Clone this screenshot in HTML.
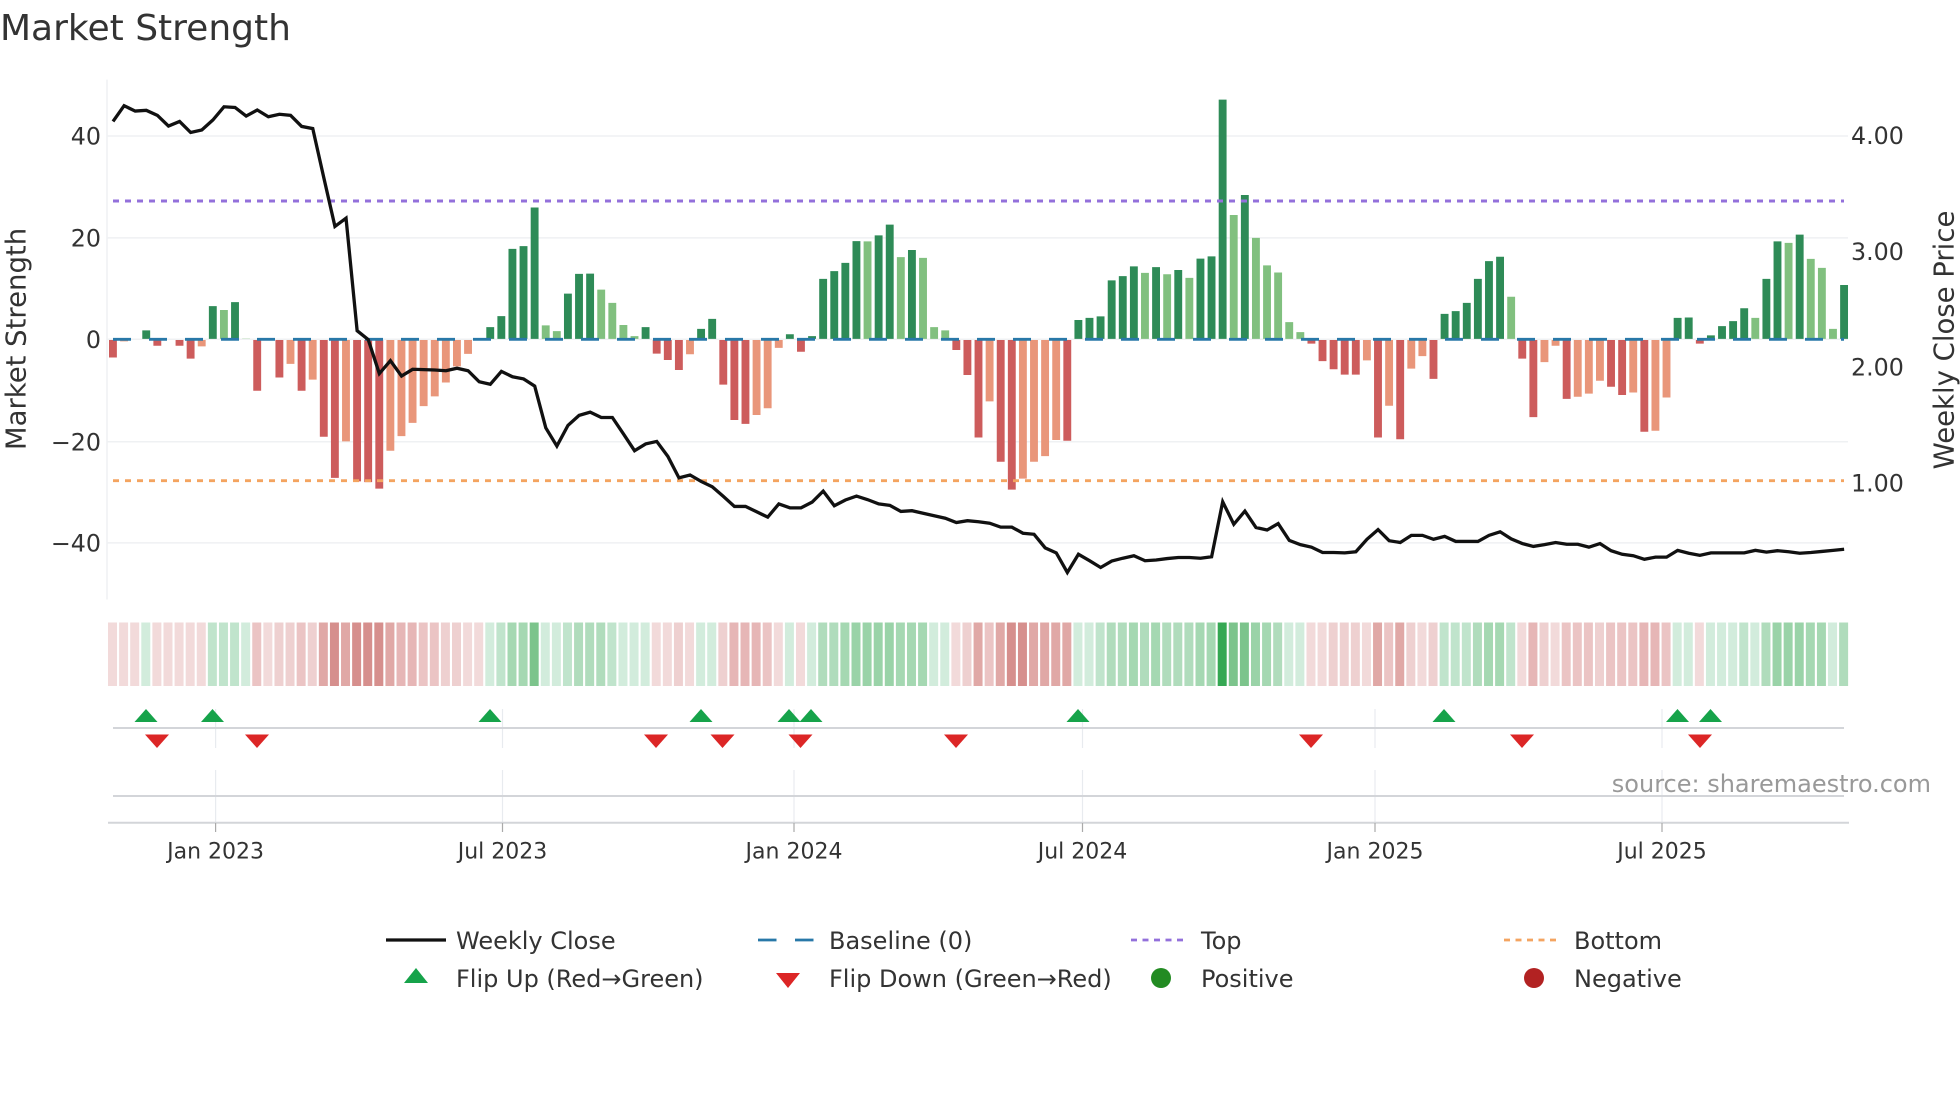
<!DOCTYPE html>
<html><head><meta charset="utf-8"><title>Market Strength</title>
<style>
html,body{margin:0;padding:0;background:#fff}
svg{display:block}
text{font-family:"DejaVu Sans","Liberation Sans",sans-serif}
.t{font-size:23.75px;fill:#333}
.d{font-size:22px;fill:#333;text-anchor:middle}
.l{font-size:24px;fill:#333}
</style></head><body>
<svg width="1960" height="1102" viewBox="0 0 1960 1102" xmlns="http://www.w3.org/2000/svg">
<rect width="1960" height="1102" fill="#fff"/>
<text x="0" y="40" font-size="36" fill="#333">Market Strength</text>

<!-- grid -->
<g stroke="#eff1f3" stroke-width="1.5" fill="none">
<path d="M107 136H1848M107 237.900H1848M107 339.300H1848M107 441.800H1848M107 542.900H1848"/>
<path d="M107 79.600V599.500"/>
</g>

<!-- bars -->
<g transform="translate(109,60) scale(11.097,.35714)">
<path fill="#2e8b57" d="M3 757h.71V781h-.71zM9 689h.71V781h-.71zM11 678h.71V781h-.71zM34 748h.71V781h-.71zM35 717h.71V781h-.71zM36 529h.71V781h-.71zM37 521h.71V781h-.71zM38 413h.71V781h-.71zM41 654h.71V781h-.71zM42 599h.71V781h-.71zM43 598h.71V781h-.71zM48 748h.71V781h-.71zM53 753h.71V781h-.71zM54 725h.71V781h-.71zM61 768h.71V781h-.71zM63 773h.71V781h-.71zM64 613h.71V781h-.71zM65 591h.71V781h-.71zM66 568h.71V781h-.71zM67 507h.71V781h-.71zM69 491h.71V781h-.71zM70 461h.71V781h-.71zM72 532h.71V781h-.71zM87 728h.71V781h-.71zM88 722h.71V781h-.71zM89 718h.71V781h-.71zM90 617h.71V781h-.71zM91 605h.71V781h-.71zM92 578h.71V781h-.71zM94 580h.71V781h-.71zM96 588h.71V781h-.71zM98 556h.71V781h-.71zM99 550h.71V781h-.71zM100 111h.71V781h-.71zM102 378h.71V781h-.71zM120 711h.71V781h-.71zM121 703h.71V781h-.71zM122 680h.71V781h-.71zM123 613h.71V781h-.71zM124 563h.71V781h-.71zM125 551h.71V781h-.71zM141 722h.71V781h-.71zM142 721h.71V781h-.71zM144 771h.71V781h-.71zM145 745h.71V781h-.71zM146 731h.71V781h-.71zM147 695h.71V781h-.71zM149 613h.71V781h-.71zM150 508h.71V781h-.71zM152 489h.71V781h-.71zM156 630h.71V781h-.71z"/>
<path fill="#81c07f" d="M10 700h.71V781h-.71zM12 780h.71V781h-.71zM39 743h.71V781h-.71zM40 759h.71V781h-.71zM44 643h.71V781h-.71zM45 680h.71V781h-.71zM46 742h.71V781h-.71zM47 773h.71V781h-.71zM68 508h.71V781h-.71zM71 552h.71V781h-.71zM73 554h.71V781h-.71zM74 748h.71V781h-.71zM75 757h.71V781h-.71zM93 596h.71V781h-.71zM95 600h.71V781h-.71zM97 610h.71V781h-.71zM101 434h.71V781h-.71zM103 498h.71V781h-.71zM104 575h.71V781h-.71zM105 595h.71V781h-.71zM106 734h.71V781h-.71zM107 762h.71V781h-.71zM126 663h.71V781h-.71zM148 722h.71V781h-.71zM151 512h.71V781h-.71zM153 557h.71V781h-.71zM154 582h.71V781h-.71zM155 753h.71V781h-.71z"/>
<path fill="#cd5c5c" d="M0 784h.71V833h-.71zM4 784h.71V800h-.71zM6 784h.71V800h-.71zM7 784h.71V836h-.71zM13 784h.71V926h-.71zM15 784h.71V889h-.71zM17 784h.71V926h-.71zM19 784h.71V1055h-.71zM20 784h.71V1170h-.71zM22 784h.71V1180h-.71zM23 784h.71V1182h-.71zM24 784h.71V1200h-.71zM49 784h.71V822h-.71zM50 784h.71V840h-.71zM51 784h.71V868h-.71zM55 784h.71V909h-.71zM56 784h.71V1008h-.71zM57 784h.71V1019h-.71zM62 784h.71V817h-.71zM76 784h.71V812h-.71zM77 784h.71V882h-.71zM78 784h.71V1057h-.71zM80 784h.71V1125h-.71zM81 784h.71V1203h-.71zM86 784h.71V1066h-.71zM108 784h.71V794h-.71zM109 784h.71V843h-.71zM110 784h.71V866h-.71zM111 784h.71V881h-.71zM112 784h.71V881h-.71zM114 784h.71V1057h-.71zM116 784h.71V1062h-.71zM119 784h.71V893h-.71zM127 784h.71V836h-.71zM128 784h.71V1000h-.71zM131 784h.71V949h-.71zM135 784h.71V915h-.71zM136 784h.71V938h-.71zM138 784h.71V1041h-.71zM143 784h.71V794h-.71z"/>
<path fill="#e9967a" d="M1 784h.71V788h-.71zM8 784h.71V802h-.71zM16 784h.71V851h-.71zM18 784h.71V895h-.71zM21 784h.71V1068h-.71zM25 784h.71V1094h-.71zM26 784h.71V1053h-.71zM27 784h.71V1016h-.71zM28 784h.71V969h-.71zM29 784h.71V942h-.71zM30 784h.71V903h-.71zM31 784h.71V858h-.71zM32 784h.71V823h-.71zM52 784h.71V824h-.71zM58 784h.71V994h-.71zM59 784h.71V975h-.71zM60 784h.71V806h-.71zM79 784h.71V956h-.71zM82 784h.71V1172h-.71zM83 784h.71V1125h-.71zM84 784h.71V1109h-.71zM85 784h.71V1064h-.71zM113 784h.71V841h-.71zM115 784h.71V968h-.71zM117 784h.71V864h-.71zM118 784h.71V829h-.71zM129 784h.71V846h-.71zM130 784h.71V800h-.71zM132 784h.71V943h-.71zM133 784h.71V934h-.71zM134 784h.71V898h-.71zM137 784h.71V931h-.71zM139 784h.71V1038h-.71zM140 784h.71V945h-.71z"/>
</g>

<!-- reference lines -->
<line x1="113" x2="1844" y1="339.300" y2="339.300" stroke="#2878a8" stroke-width="2.900" stroke-dasharray="18 18"/>
<line x1="113" x2="1844" y1="201" y2="201" stroke="#9370db" stroke-width="2.900" stroke-dasharray="6 6"/>
<line x1="113" x2="1844" y1="480.700" y2="480.700" stroke="#f4a460" stroke-width="2.900" stroke-dasharray="6 6"/>

<!-- price line -->
<g transform="translate(113,60) scale(11.097,.35714)">
<path fill="none" stroke="#111" stroke-width="3.300" stroke-linejoin="miter" vector-effect="non-scaling-stroke" d="M0 172L1 128L2 143L3 141L4 155L5 185L6 172L7 203L8 196L9 168L10 131L11 133L12 157L13 140L14 159L15 152L16 155L17 186L18 192L19 330L20 466L21 443L22 758L23 783L24 878L25 842L26 885L27 866L28 867L29 868L30 870L31 863L32 870L33 901L34 908L35 872L36 887L37 893L38 913L39 1030L40 1081L41 1023L42 995L43 986L44 1001L45 1001L46 1047L47 1094L48 1075L49 1068L50 1110L51 1170L52 1162L53 1180L54 1195L55 1222L56 1250L57 1250L58 1265L59 1280L60 1243L61 1254L62 1254L63 1238L64 1207L65 1248L66 1232L67 1221L68 1231L69 1243L70 1247L71 1264L72 1262L73 1269L74 1276L75 1283L76 1295L77 1290L78 1293L79 1297L80 1308L81 1308L82 1325L83 1328L84 1366L85 1380L86 1435L87 1384L88 1402L89 1421L90 1403L91 1395L92 1388L93 1402L94 1400L95 1396L96 1393L97 1393L98 1395L99 1391L100 1237L101 1300L102 1263L103 1309L104 1316L105 1298L106 1345L107 1357L108 1364L109 1379L110 1379L111 1380L112 1377L113 1342L114 1315L115 1346L116 1351L117 1331L118 1331L119 1342L120 1334L121 1348L122 1348L123 1348L124 1331L125 1321L126 1341L127 1354L128 1362L129 1357L130 1351L131 1356L132 1356L133 1364L134 1354L135 1374L136 1384L137 1388L138 1398L139 1392L140 1392L141 1373L142 1381L143 1387L144 1380L145 1380L146 1380L147 1380L148 1373L149 1378L150 1374L151 1377L152 1381L153 1379L154 1376L155 1373L156 1370"/>
</g>

<!-- axis labels -->
<g text-anchor="end">
<text class="t" x="101" y="144.500">40</text>
<text class="t" x="101" y="246.500">20</text>
<text class="t" x="101" y="347.800">0</text>
<text class="t" x="101" y="450.500">−20</text>
<text class="t" x="101" y="551.500">−40</text>
</g>
<text class="t" x="1851" y="144.200">4.00</text>
<text class="t" x="1851" y="260.200">3.00</text>
<text class="t" x="1851" y="375.500">2.00</text>
<text class="t" x="1851" y="491.600">1.00</text>
<text font-size="27.500" fill="#333" text-anchor="middle" transform="translate(25.500,339) rotate(-90)">Market Strength</text>
<text font-size="27.500" fill="#333" text-anchor="middle" transform="translate(1953.500,340) rotate(-90)">Weekly Close Price</text>

<!-- heat strip -->
<g transform="translate(108,622.5) scale(11.097,63.5)">
<path fill="#f2dada" d="M0 0h.81v1h-.81zM1 0h.81v1h-.81zM2 0h.81v1h-.81zM4 0h.81v1h-.81zM5 0h.81v1h-.81zM6 0h.81v1h-.81zM7 0h.81v1h-.81zM8 0h.81v1h-.81zM14 0h.81v1h-.81zM32 0h.81v1h-.81zM33 0h.81v1h-.81zM49 0h.81v1h-.81zM50 0h.81v1h-.81zM52 0h.81v1h-.81zM60 0h.81v1h-.81zM62 0h.81v1h-.81zM76 0h.81v1h-.81zM108 0h.81v1h-.81zM109 0h.81v1h-.81zM113 0h.81v1h-.81zM118 0h.81v1h-.81zM127 0h.81v1h-.81zM130 0h.81v1h-.81zM143 0h.81v1h-.81z"/>
<path fill="#eed0d0" d="M15 0h.81v1h-.81zM16 0h.81v1h-.81zM18 0h.81v1h-.81zM30 0h.81v1h-.81zM31 0h.81v1h-.81zM51 0h.81v1h-.81zM55 0h.81v1h-.81zM77 0h.81v1h-.81zM110 0h.81v1h-.81zM111 0h.81v1h-.81zM112 0h.81v1h-.81zM117 0h.81v1h-.81zM119 0h.81v1h-.81zM129 0h.81v1h-.81zM134 0h.81v1h-.81z"/>
<path fill="#ebc4c4" d="M13 0h.81v1h-.81zM17 0h.81v1h-.81zM28 0h.81v1h-.81zM29 0h.81v1h-.81zM59 0h.81v1h-.81zM79 0h.81v1h-.81zM115 0h.81v1h-.81zM131 0h.81v1h-.81zM132 0h.81v1h-.81zM133 0h.81v1h-.81zM135 0h.81v1h-.81zM136 0h.81v1h-.81zM137 0h.81v1h-.81zM140 0h.81v1h-.81z"/>
<path fill="#e6b6b6" d="M26 0h.81v1h-.81zM27 0h.81v1h-.81zM56 0h.81v1h-.81zM57 0h.81v1h-.81zM58 0h.81v1h-.81zM128 0h.81v1h-.81zM138 0h.81v1h-.81zM139 0h.81v1h-.81z"/>
<path fill="#e0a8a6" d="M19 0h.81v1h-.81zM21 0h.81v1h-.81zM25 0h.81v1h-.81zM78 0h.81v1h-.81zM80 0h.81v1h-.81zM83 0h.81v1h-.81zM84 0h.81v1h-.81zM85 0h.81v1h-.81zM86 0h.81v1h-.81zM114 0h.81v1h-.81zM116 0h.81v1h-.81z"/>
<path fill="#d68f8d" d="M20 0h.81v1h-.81zM22 0h.81v1h-.81zM23 0h.81v1h-.81zM24 0h.81v1h-.81zM81 0h.81v1h-.81zM82 0h.81v1h-.81z"/>
<path fill="#d2ecdc" d="M3 0h.81v1h-.81zM12 0h.81v1h-.81zM34 0h.81v1h-.81zM39 0h.81v1h-.81zM40 0h.81v1h-.81zM46 0h.81v1h-.81zM47 0h.81v1h-.81zM48 0h.81v1h-.81zM53 0h.81v1h-.81zM54 0h.81v1h-.81zM61 0h.81v1h-.81zM63 0h.81v1h-.81zM74 0h.81v1h-.81zM75 0h.81v1h-.81zM87 0h.81v1h-.81zM88 0h.81v1h-.81zM106 0h.81v1h-.81zM107 0h.81v1h-.81zM141 0h.81v1h-.81zM142 0h.81v1h-.81zM144 0h.81v1h-.81zM145 0h.81v1h-.81zM146 0h.81v1h-.81zM148 0h.81v1h-.81zM155 0h.81v1h-.81z"/>
<path fill="#c0e4cc" d="M9 0h.81v1h-.81zM10 0h.81v1h-.81zM11 0h.81v1h-.81zM35 0h.81v1h-.81zM41 0h.81v1h-.81zM45 0h.81v1h-.81zM89 0h.81v1h-.81zM120 0h.81v1h-.81zM121 0h.81v1h-.81zM122 0h.81v1h-.81zM126 0h.81v1h-.81zM147 0h.81v1h-.81z"/>
<path fill="#b0dcbc" d="M42 0h.81v1h-.81zM43 0h.81v1h-.81zM44 0h.81v1h-.81zM64 0h.81v1h-.81zM65 0h.81v1h-.81zM90 0h.81v1h-.81zM91 0h.81v1h-.81zM93 0h.81v1h-.81zM95 0h.81v1h-.81zM96 0h.81v1h-.81zM97 0h.81v1h-.81zM105 0h.81v1h-.81zM123 0h.81v1h-.81zM149 0h.81v1h-.81zM156 0h.81v1h-.81z"/>
<path fill="#a5d8b2" d="M36 0h.81v1h-.81zM37 0h.81v1h-.81zM66 0h.81v1h-.81zM71 0h.81v1h-.81zM72 0h.81v1h-.81zM73 0h.81v1h-.81zM92 0h.81v1h-.81zM94 0h.81v1h-.81zM98 0h.81v1h-.81zM99 0h.81v1h-.81zM104 0h.81v1h-.81zM124 0h.81v1h-.81zM125 0h.81v1h-.81zM153 0h.81v1h-.81zM154 0h.81v1h-.81z"/>
<path fill="#9ad3a8" d="M67 0h.81v1h-.81zM68 0h.81v1h-.81zM69 0h.81v1h-.81zM70 0h.81v1h-.81zM103 0h.81v1h-.81zM150 0h.81v1h-.81zM151 0h.81v1h-.81zM152 0h.81v1h-.81z"/>
<path fill="#7cc48c" d="M38 0h.81v1h-.81zM101 0h.81v1h-.81zM102 0h.81v1h-.81z"/>
<path fill="#35a853" d="M100 0h.81v1h-.81z"/>
</g>

<!-- flip track -->
<g stroke="#e8ebef" stroke-width="1.2">
<path d="M215.6 709V748M502.5 709V748M794 709V748M1082.5 709V748M1375 709V748M1662 709V748"/>
<path d="M215.6 770V823M502.5 770V823M794 770V823M1082.5 770V823M1375 770V823M1662 770V823"/>
</g>
<g stroke="#d3d5d9" stroke-width="2">
<path d="M113 728H1844M113 796H1844"/>
<path d="M108 822.8H1849"/>
</g>
<path stroke="#aaa" stroke-width="1.2" d="M215.6 823V832M502.5 823V832M794 823V832M1082.5 823V832M1375 823V832M1662 823V832"/>

<g fill="#16a34a">
<path d="M146 709l-11.500 13h23z"/>
<path d="M212.500 709l-11.500 13h23z"/>
<path d="M490 709l-11.500 13h23z"/>
<path d="M701 709l-11.500 13h23z"/>
<path d="M789 709l-11.500 13h23z"/>
<path d="M811 709l-11.500 13h23z"/>
<path d="M1078 709l-11.500 13h23z"/>
<path d="M1444 709l-11.500 13h23z"/>
<path d="M1677.500 709l-11.500 13h23z"/>
<path d="M1710.500 709l-11.500 13h23z"/>
</g>
<g fill="#dc2626">
<path d="M157 748l-12-13.500h24z"/>
<path d="M257 748l-12-13.500h24z"/>
<path d="M656 748l-12-13.500h24z"/>
<path d="M722.500 748l-12-13.500h24z"/>
<path d="M800.500 748l-12-13.500h24z"/>
<path d="M956 748l-12-13.500h24z"/>
<path d="M1311 748l-12-13.500h24z"/>
<path d="M1522 748l-12-13.500h24z"/>
<path d="M1700 748l-12-13.500h24z"/>
</g>

<text class="d" x="215.600" y="858.500">Jan 2023</text>
<text class="d" x="502.500" y="858.500">Jul 2023</text>
<text class="d" x="794" y="858.500">Jan 2024</text>
<text class="d" x="1082.500" y="858.500">Jul 2024</text>
<text class="d" x="1375" y="858.500">Jan 2025</text>
<text class="d" x="1662" y="858.500">Jul 2025</text>

<text x="1931" y="792" font-size="24" fill="#999" text-anchor="end">source: sharemaestro.com</text>

<!-- legend -->
<line x1="386" x2="446" y1="940" y2="940" stroke="#111" stroke-width="3.200"/>
<line x1="758" x2="814" y1="940" y2="940" stroke="#2878a8" stroke-width="2.800" stroke-dasharray="18.500 18.500"/>
<line x1="1131" x2="1186" y1="940" y2="940" stroke="#9370db" stroke-width="2.800" stroke-dasharray="6 5.500"/>
<line x1="1504" x2="1559" y1="940" y2="940" stroke="#f4a460" stroke-width="2.800" stroke-dasharray="6 5.500"/>
<path fill="#16a34a" d="M416 968l-12 15h24z"/>
<path fill="#dc2626" d="M788 988l-12-15h24z"/>
<circle cx="1161" cy="978" r="10" fill="#228b22"/>
<circle cx="1534" cy="978" r="10" fill="#b22222"/>
<text class="l" x="456" y="949">Weekly Close</text>
<text class="l" x="829" y="949">Baseline (0)</text>
<text class="l" x="1201" y="949">Top</text>
<text class="l" x="1574" y="949">Bottom</text>
<text class="l" x="456" y="987">Flip Up (Red→Green)</text>
<text class="l" x="829" y="987">Flip Down (Green→Red)</text>
<text class="l" x="1201" y="987">Positive</text>
<text class="l" x="1574" y="987">Negative</text>
</svg>
</body></html>
